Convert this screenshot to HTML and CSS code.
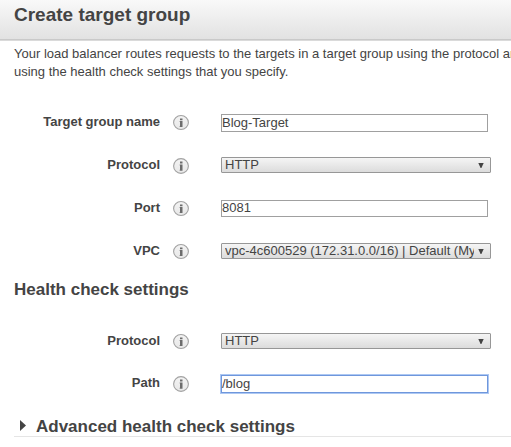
FILE: index.html
```html
<!DOCTYPE html>
<html lang="en">
<head>
<meta charset="utf-8">
<title>Create target group</title>
<link rel="stylesheet" href="styles.css">
</head>
<body>
<svg width="0" height="0" class="defs"><defs>
<linearGradient id="disc" x1="0" y1="0" x2="0" y2="1"><stop offset="0" stop-color="#f3f3f3"/><stop offset="1" stop-color="#e8e8e8"/></linearGradient>
<symbol id="info" viewBox="0 0 16 16" preserveAspectRatio="none"><circle cx="8" cy="8" r="7.4" fill="url(#disc)" stroke="#a2a2a2" stroke-width="1.1"/><path d="M7 3.6h2.5v2H7zM7 6.4h2.5v6.4H7z" fill="#6c6c6c"/><path d="M6.3 6.4h.7v1h-.7zM6.3 11.8h.7v1h-.7z" fill="#b5b5b5"/></symbol>
</defs></svg>
<header class="header"><h1>Create target group</h1></header>
<main>
<p class="intro">Your load balancer routes requests to the targets in a target group using the protocol and port that you specify,<br>using the health check settings that you specify.</p>
<div class="row"><label>Target group name</label><svg class="info"><use href="#info"/></svg><div class="input">Blog-Target</div></div>
<div class="row"><label>Protocol</label><svg class="info tall"><use href="#info"/></svg><div class="select"><span>HTTP</span><svg class="arrow" viewBox="0 0 6 5"><path d="M.3 0h5.4L3.4 5h-.8z"/></svg></div></div>
<div class="row"><label>Port</label><svg class="info"><use href="#info"/></svg><div class="input short">8081</div></div>
<div class="row"><label>VPC</label><svg class="info"><use href="#info"/></svg><div class="select"><span>vpc-4c600529 (172.31.0.0/16) | Default (My VPC)</span><svg class="arrow" viewBox="0 0 6 5"><path d="M.3 0h5.4L3.4 5h-.8z"/></svg></div></div>
<h2 class="section">Health check settings</h2>
<div class="row tight"><label>Protocol</label><svg class="info"><use href="#info"/></svg><div class="select"><span>HTTP</span><svg class="arrow" viewBox="0 0 6 5"><path d="M.3 0h5.4L3.4 5h-.8z"/></svg></div></div>
<div class="row"><label>Path</label><svg class="info tall"><use href="#info"/></svg><div class="input focused">/blog</div></div>
<h2 class="advanced"><svg viewBox="0 0 6 11"><path d="M0 0l6 5.5-6 5.5z"/></svg>Advanced health check settings</h2>
</main>
</body>
</html>
```
FILE: styles.css
```css
* { box-sizing: border-box; }
html { overflow: hidden; }
body {
  margin: 0;
  height: 447px;
  overflow: hidden;
  background: #fff;
  color: #444;
  font: 13px/18px "Liberation Sans", Arial, sans-serif;
}
.defs { position: absolute; }
h1, h2, p { margin: 0; }
.header {
  height: 41px;
  padding: 3px 14px 0;
  border-bottom: 1px solid #dadada;
  background: linear-gradient(#f9f9f9, #e1e1e1);
  box-shadow: inset 0 -1px #c9c9c9;
}
h1 { font-size: 19px; line-height: 24px; }
h2 { font-size: 17px; line-height: 20px; }
.intro {
  height: 60px;
  padding: 4px 0 0 14px;
  white-space: nowrap;
  overflow: hidden;
}
.row {
  display: grid;
  grid-template-columns: 160px 16px 289px;
  column-gap: 13px;
  height: 43px;
  align-items: start;
}
.row > :last-child { margin-left: 19px; }
.tight { height: 42px; }
label {
  padding-top: 12px;
  text-align: right;
  font-weight: bold;
}
.info { width: 16px; height: 15px; margin-top: 14px; }
.tall { height: 16px; }
.input {
  width: 267px;
  height: 18px;
  margin-top: 13px;
  border: 1px solid #a0a0a0;
  line-height: 15px;
}
.short { height: 17px; line-height: 14px; }
.focused {
  border-color: #6f97dc;
  box-shadow: 0 0 0 1px #adc8f3;
}
.select {
  display: flex;
  width: 270px;
  height: 16px;
  margin-top: 13px;
  padding: 0 6px 0 3px;
  border: 1px solid #979797;
  border-radius: 1px;
  background: linear-gradient(#f5f5f5, #dcdcdc);
  line-height: 14px;
  white-space: nowrap;
}
.select span { width: 250px; overflow: hidden; }
.arrow { width: 6px; height: 5px; margin: 5px 0 0 4px; fill: #444; flex: none; }
.section { height: 47px; padding: 7px 0 0 14px; }
.advanced {
  display: flex;
  align-items: flex-start;
  gap: 10px;
  height: 32px;
  margin-left: 14px;
  padding: 12px 0 0 6px;
  border-bottom: 1px solid #e5e5e5;
}
.advanced svg { width: 6px; height: 11px; margin-top: 3px; fill: #444; }
```
